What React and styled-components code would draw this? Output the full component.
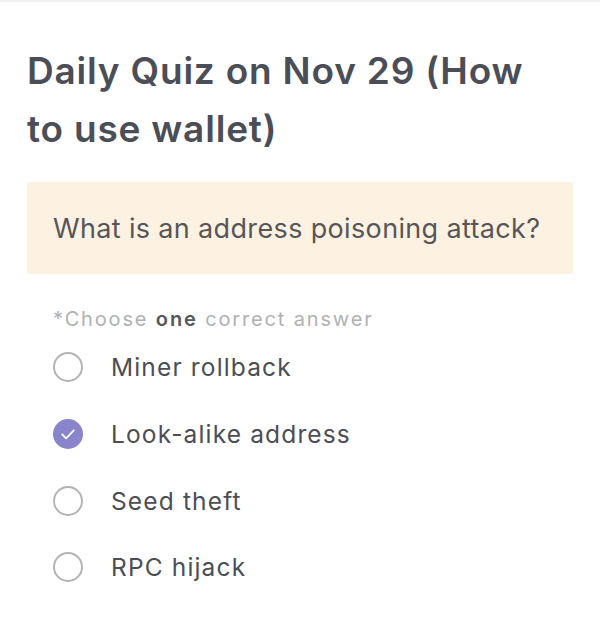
import React from "react";
import styled, { createGlobalStyle } from "styled-components";

const Global = createGlobalStyle`
  html, body { margin: 0; padding: 0; background: #fff; }
  body { font-family: Inter, "Noto Sans", sans-serif; -webkit-font-smoothing: antialiased; }
`;

const Page = styled.div`
  width: 600px;
  height: 634px;
  box-sizing: border-box;
  border-top: 2px solid #f2f2f2;
  padding: 40px 27px 0 27px;
  display: flex;
  flex-direction: column;
`;

const Title = styled.h1`
  margin: 0;
  max-width: 535px;
  font-size: 37px;
  font-weight: 600;
  line-height: 58px;
  letter-spacing: 0.8px;
  color: #4b4e56;
`;

const QuestionBox = styled.div`
  margin-top: 24px;
  background: #fdf2e1;
  border-radius: 3px;
  height: 92px;
  box-sizing: border-box;
  padding: 0 26px;
  display: flex;
  align-items: center;
  font-size: 27px;
  color: #56565a;
  letter-spacing: 0.35px;
`;

const Hint = styled.div`
  margin-top: 33px;
  padding-left: 26px;
  font-size: 20px;
  color: #b1b1b3;
  line-height: 24px;
  letter-spacing: 1.85px;
  b { font-weight: 600; color: #55575d; }
`;

const Options = styled.div`
  display: flex;
  flex-direction: column;
  margin-top: 3px;
`;

const Option = styled.label`
  display: flex;
  align-items: center;
  height: 66.7px;
  padding-left: 26px;
  gap: 28px;
  font-size: 24.5px;
  letter-spacing: 1.15px;
  color: #4b4e56;
  cursor: pointer;
`;

const Radio = styled.span`
  width: 30px;
  height: 30px;
  box-sizing: border-box;
  border-radius: 50%;
  border: ${(p) => (p.$checked ? "none" : "2px solid #b3b3b5")};
  background: ${(p) => (p.$checked ? "#8885cb" : "transparent")};
  display: flex;
  align-items: center;
  justify-content: center;
  flex-shrink: 0;
`;

const options = ["Miner rollback", "Look-alike address", "Seed theft", "RPC hijack"];

export default function App() {
  return (
    <>
      <Global />
      <Page>
        <Title>Daily Quiz on Nov 29 (How to use wallet)</Title>
        <QuestionBox>What is an address poisoning attack?</QuestionBox>
        <Hint>
          *Choose <b>one</b> correct answer
        </Hint>
        <Options>
          {options.map((o, i) => {
            const checked = i === 1;
            return (
              <Option key={o}>
                <Radio $checked={checked}>
                  {checked && (
                    <svg width="22" height="22" viewBox="0 0 16 16" fill="none">
                      <path d="M3.8 8.3l2.8 2.8 5.6-5.8" stroke="#fff" strokeWidth="1.3" strokeLinecap="round" strokeLinejoin="round" />
                    </svg>
                  )}
                </Radio>
                {o}
              </Option>
            );
          })}
        </Options>
      </Page>
    </>
  );
}
